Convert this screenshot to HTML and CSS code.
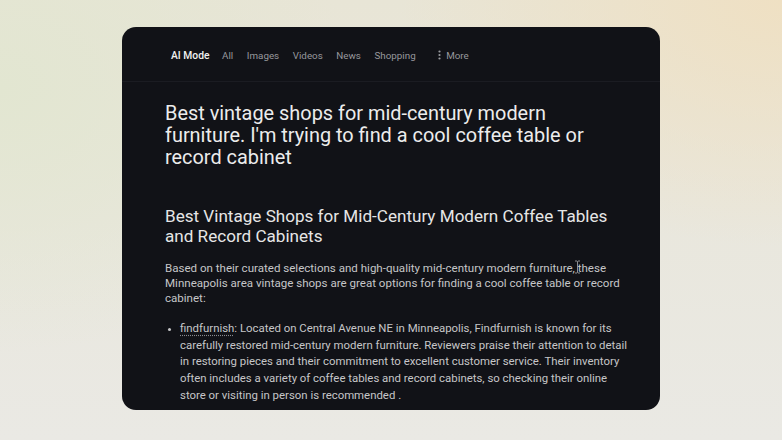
FILE: index.html
```html
<!DOCTYPE html>
<html>
<head>
<meta charset="utf-8">
<link rel="stylesheet" href="styles.css">
</head>
<body>
<div class="stage">
  <div class="card">
    <nav class="nav">
      <span class="tab active">AI Mode</span>
      <span class="tab">All</span>
      <span class="tab">Images</span>
      <span class="tab">Videos</span>
      <span class="tab">News</span>
      <span class="tab">Shopping</span>
      <span class="tab more"><svg class="dots" width="3" height="10" viewBox="0 0 3 10"><circle cx="1.5" cy="1.5" r="1.1" fill="#9a9ba0"/><circle cx="1.5" cy="5" r="1.1" fill="#9a9ba0"/><circle cx="1.5" cy="8.5" r="1.1" fill="#9a9ba0"/></svg>More</span>
    </nav>
    <main class="content">
      <h1 class="query">Best vintage shops for mid-century modern furniture. I'm trying to find a cool coffee table or record cabinet</h1>
      <h2 class="answer-title">Best Vintage Shops for Mid-Century Modern Coffee Tables and Record Cabinets</h2>
      <p class="intro">Based on their curated selections and high-quality mid-century modern furniture<span class="caret-wrap">,<svg class="ibeam" width="7" height="14" viewBox="0 0 7 14"><path d="M1 1h2l0.5 0.6L4 1h2M3.5 1.6v10.8M1 13h2l0.5-0.6L4 13h2" stroke="#8d8e92" stroke-width="1" fill="none"/></svg></span> these Minneapolis area vintage shops are great options for finding a cool coffee table or record cabinet:</p>
      <ul class="list">
        <li><span class="link">findfurnish</span>: Located on Central Avenue NE in Minneapolis, Findfurnish is known for its carefully restored mid-century modern furniture. Reviewers praise their attention to detail in restoring pieces and their commitment to excellent customer service. Their inventory often includes a variety of coffee tables and record cabinets, so checking their online store or visiting in person is recommended .</li>
      </ul>
    </main>
  </div>
</div>
</body>
</html>
```
FILE: styles.css
```css
html, body {
  margin: 0;
  padding: 0;
}
body {
  width: 782px;
  height: 440px;
  overflow: hidden;
  font-family: Roboto, "Liberation Sans", sans-serif;
  background:
    radial-gradient(ellipse 70% 80% at 100% 0%, #efe0c3 0%, rgba(239,224,195,0) 70%),
    radial-gradient(ellipse 60% 80% at 0% 20%, #e2e6d1 0%, rgba(226,230,209,0) 75%),
    linear-gradient(180deg, #e8e5d6 0%, #eae9e4 100%);
}
.stage {
  display: flex;
  justify-content: center;
  padding-top: 27px;
}
.card {
  width: 538px;
  height: 383px;
  background: #111217;
  border-radius: 14px;
  overflow: hidden;
  box-sizing: border-box;
}
.nav {
  height: 55px;
  box-sizing: border-box;
  border-bottom: 1px solid #1b1c22;
  display: flex;
  align-items: center;
  padding-left: 49px;
  padding-top: 2px;
  gap: 13.6px;
  font-size: 9.8px;
}
.tab {
  color: #97989d;
  display: flex;
  align-items: center;
}
.tab.active {
  color: #f1f1f1;
  font-weight: 500;
  font-size: 10.3px;
  margin-right: -1px;
}
.tab.more {
  margin-left: 9px;
}
.dots {
  margin-right: 5px;
}
.content {
  padding: 21px 28px 0 43px;
}
.query {
  margin: 0;
  font-weight: 400;
  font-size: 19.9px;
  line-height: 22px;
  color: #ececec;
  max-width: 440px;
}
.answer-title {
  margin: 37px 0 0;
  font-weight: 400;
  font-size: 17.1px;
  line-height: 20px;
  color: #e6e6e6;
  max-width: 450px;
}
.intro {
  margin: 15px 0 0;
  font-size: 11.55px;
  line-height: 15px;
  color: #c6c6c8;
  max-width: 455px;
}
.caret-wrap {
  position: relative;
}
.ibeam {
  position: absolute;
  left: 1px;
  top: -1px;
}
.list {
  margin: 14px 0 0;
  padding-left: 15px;
  font-size: 11.4px;
  line-height: 16.7px;
  color: #c6c6c8;
}
.list li::marker {
  font-size: 9px;
}
.link {
  text-decoration: underline dotted #8a8b90;
  text-underline-offset: 3px;
}
```
